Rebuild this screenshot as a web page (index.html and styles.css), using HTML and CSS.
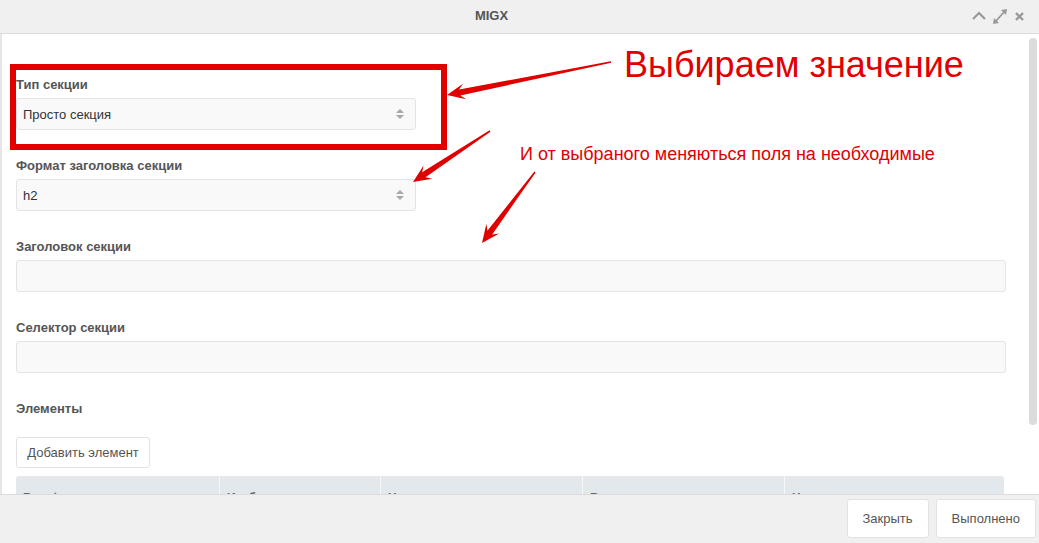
FILE: index.html
```html
<!DOCTYPE html>
<html>
  <head>
    <meta charset="utf-8">
    <link rel="stylesheet" href="styles.css">
  </head>
  <body>
    <div class="modal">
      <div class="modal__head">
        <div class="modal__title">MIGX</div>
        <div class="modal__tools">
          <svg width="72" height="33" viewBox="0 0 72 33">
            <polyline points="6,19 12,13 18,19" fill="none" stroke="#999" stroke-width="2.2"/>
            <line x1="29" y1="21" x2="37" y2="12" stroke="#999" stroke-width="1.8"/>
            <polygon points="40,9 34,10 39,15" fill="#999"/>
            <polygon points="26,24 32,23 27,18" fill="#999"/>
            <line x1="49" y1="13" x2="56" y2="20" stroke="#999" stroke-width="2.4"/>
            <line x1="56" y1="13" x2="49" y2="20" stroke="#999" stroke-width="2.4"/>
          </svg>
        </div>
      </div>

      <div class="modal__body">
        <div class="form">
          <div class="field">
            <label class="field__label">Тип секции</label>
            <div class="field__control field__control--select">
              <span>Просто секция</span>
              <svg class="sort" width="8" height="12" viewBox="0 0 8 12">
                <polygon points="0,5 4,1 8,5" fill="#a8a8a8"/>
                <polygon points="0,7 4,11 8,7" fill="#a8a8a8"/>
              </svg>
            </div>
          </div>
          <div class="field">
            <label class="field__label">Формат заголовка секции</label>
            <div class="field__control field__control--select">
              <span>h2</span>
              <svg class="sort" width="8" height="12" viewBox="0 0 8 12">
                <polygon points="0,5 4,1 8,5" fill="#a8a8a8"/>
                <polygon points="0,7 4,11 8,7" fill="#a8a8a8"/>
              </svg>
            </div>
          </div>
          <div class="field">
            <label class="field__label">Заголовок секции</label>
            <div class="field__control"></div>
          </div>
          <div class="field">
            <label class="field__label">Селектор секции</label>
            <div class="field__control"></div>
          </div>
          <div class="field field--grid">
            <label class="field__label field__label--wide">Элементы</label>
            <div class="btn btn--small">Добавить элемент</div>
            <div class="grid">
              <div class="grid__cell grid__cell--a">Вид формата</div>
              <div class="grid__cell grid__cell--b">Изображение</div>
              <div class="grid__cell grid__cell--c">Название</div>
              <div class="grid__cell grid__cell--c">Видимость</div>
              <div class="grid__cell grid__cell--d">Навигация</div>
            </div>
          </div>
        </div>
        <div class="scrollbar"></div>
      </div>

      <div class="modal__foot">
        <div class="btn btn--foot">Закрыть</div>
        <div class="btn btn--foot">Выполнено</div>
      </div>

      <!-- annotations drawn over the screenshot -->
      <svg class="notes" width="1039" height="543" viewBox="0 0 1039 543">
        <rect x="13" y="67" width="431" height="80" fill="none" stroke="#e00000" stroke-width="6"/>
        <polygon fill="#e00000" points="610.8,61.2 459.1,89.5 463.0,83.7 447,95 466.2,99.3 460.3,95.4 611.2,62.8"/>
        <polygon fill="#e00000" points="489.6,130.3 422.1,172.3 423.6,165.4 413,182 432.4,178.8 425.5,177.3 490.4,131.7"/>
        <polygon fill="#e00000" points="534.4,171.5 487.4,230.8 486.4,223.8 482,243 499.2,233.4 492.2,234.4 535.6,172.5"/>
      </svg>
      <div class="note note--big">Выбираем значение</div>
      <div class="note note--small">И от выбраного меняються поля на необходимые</div>
    </div>
  </body>
</html>
```

FILE: styles.css
```css
html, body {
  margin: 0;
  padding: 0;
}
body {
  font-family: "Liberation Sans", Arial, sans-serif;
  font-size: 13px;
  color: #555;
  background: #fff;
}

.modal {
  position: relative;
  width: 1039px;
  height: 543px;
  display: flex;
  flex-direction: column;
  overflow: hidden;
}

.modal__head {
  display: flex;
  height: 33px;
  background: #f0f0f0;
  border-bottom: 1px solid #dcdcdc;
}
.modal__title {
  flex: 1;
  padding-left: 16px;
  text-align: center;
  font-weight: bold;
  line-height: 32px;
  color: #555;
}
.modal__tools {
  width: 72px;
  height: 33px;
}
.modal__tools svg {
  display: block;
}

.modal__body {
  display: flex;
  height: 460px;
  border-left: 2px solid #e6e6e6;
  background: #fff;
  overflow: hidden;
}
.form {
  flex: 1;
  padding: 43px 0 0 14px;
}
.scrollbar {
  width: 8px;
  height: 387px;
  margin: 4px 2px 0 23px;
  border-radius: 4px;
  background: #dcdcdc;
}

.field {
  margin-bottom: 28px;
}
.field__label {
  display: block;
  font-weight: bold;
  line-height: 16px;
  margin-bottom: 5px;
  color: #555;
}
.field__label--wide {
  margin-bottom: 20px;
}
.field__control {
  box-sizing: border-box;
  height: 32px;
  border: 1px solid #e4e4e4;
  border-radius: 3px;
  background: #f9f9f9;
}
.field__control--select {
  width: 400px;
  display: flex;
  align-items: center;
  justify-content: space-between;
  padding: 0 11px 0 6px;
  color: #333;
}
.sort {
  display: block;
}

.btn {
  box-sizing: border-box;
  display: inline-flex;
  align-items: center;
  justify-content: center;
  background: #fff;
  border: 1px solid #e2e2e2;
  border-radius: 3px;
  color: #555;
}
.btn--small {
  width: 134px;
  height: 31px;
}
.btn--foot {
  height: 39px;
  padding: 0 15px;
}

.grid {
  display: flex;
  margin-top: 8px;
  width: 988px;
  height: 40px;
  background: #e3e8ec;
  border-radius: 3px 3px 0 0;
}
.grid__cell {
  box-sizing: border-box;
  padding: 14px 7px 0;
  font-weight: bold;
  font-size: 12px;
  line-height: 16px;
  color: #666;
  border-right: 1px solid #f6f8f9;
}
.grid__cell--a { width: 204px; }
.grid__cell--b { width: 161px; }
.grid__cell--c { width: 202px; }
.grid__cell--d { flex: 1; border-right: 0; }

.modal__foot {
  flex: 1;
  display: flex;
  justify-content: flex-end;
  gap: 7px;
  padding: 4px 3px 0 0;
  background: #f0f0f0;
  border-top: 1px solid #dcdcdc;
  position: relative;
}

.notes {
  position: absolute;
  left: 0;
  top: 0;
  pointer-events: none;
}
.note {
  position: absolute;
  color: #e00000;
  white-space: nowrap;
}
.note--big {
  left: 624px;
  top: 45px;
  font-size: 36px;
  line-height: 40px;
}
.note--small {
  left: 520px;
  top: 143px;
  font-size: 18px;
  line-height: 22px;
}
```
